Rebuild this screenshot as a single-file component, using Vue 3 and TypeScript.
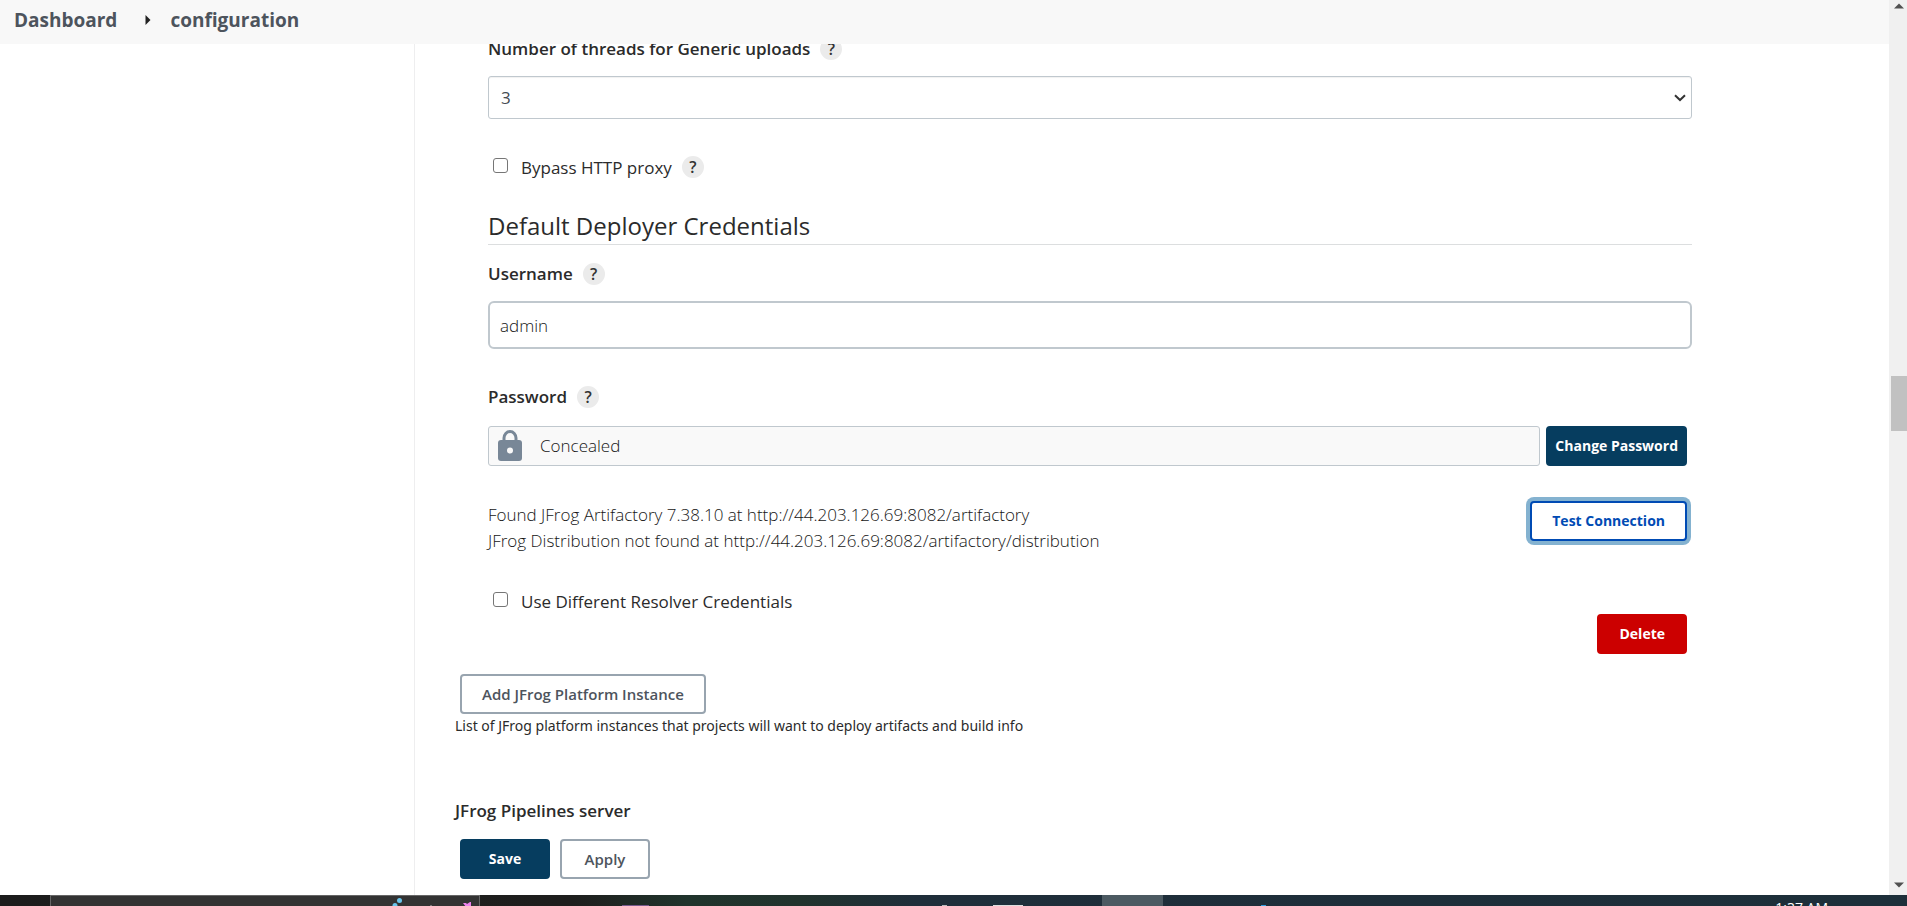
<script setup lang="ts">
import { ref } from 'vue'

const threads = ref('3')
const threadOptions = ['1', '2', '3', '4', '5', '6']
const bypassProxy = ref(false)
const username = ref('admin')
const differentResolver = ref(false)
const statusLines = [
  'Found JFrog Artifactory 7.38.10 at http://44.203.126.69:8082/artifactory',
  'JFrog Distribution not found at http://44.203.126.69:8082/artifactory/distribution',
]
</script>

<template>
  <div class="screen">
    <div class="viewport">
      <div class="page">
        <nav class="breadcrumbs" aria-label="Breadcrumb">
          <a href="#dashboard">Dashboard</a>
          <svg class="crumb-arrow" width="6" height="10" viewBox="0 0 6 10" aria-hidden="true">
            <path d="M0.5 0L5.5 5L0.5 10Z" fill="#222" />
          </svg>
          <a href="#configuration">configuration</a>
        </nav>
        <div class="body">
          <aside class="side"></aside>
          <main class="content">
            <form class="form" @submit.prevent>
              <section class="instance">
                <div class="label-row">
                  <label class="label" for="threads">Number of threads for Generic uploads</label>
                  <button type="button" class="help" aria-label="Help for threads">?</button>
                </div>
                <div class="select-wrap">
                  <select id="threads" v-model="threads">
                    <option v-for="n in threadOptions" :key="n">{{ n }}</option>
                  </select>
                  <svg class="chevron" width="12" height="8" viewBox="0 0 12 8" aria-hidden="true">
                    <path d="M1 1.2L6 6L11 1.2" fill="none" stroke="#333" stroke-width="2" />
                  </svg>
                </div>

                <div class="check-row">
                  <input id="bypass" v-model="bypassProxy" type="checkbox" />
                  <label for="bypass">Bypass HTTP proxy</label>
                  <button type="button" class="help" aria-label="Help for proxy">?</button>
                </div>

                <h2>Default Deployer Credentials</h2>

                <div class="label-row username-row">
                  <label class="label" for="username">Username</label>
                  <button type="button" class="help" aria-label="Help for username">?</button>
                </div>
                <input id="username" v-model="username" class="text-input" type="text" />

                <div class="label-row password-row">
                  <span class="label">Password</span>
                  <button type="button" class="help" aria-label="Help for password">?</button>
                </div>
                <div class="password">
                  <div class="concealed">
                    <svg width="24" height="32" viewBox="0 0 24 32" aria-hidden="true">
                      <path d="M6 12V8a6 6.5 0 0 1 12 0v4" fill="none" stroke="#788797" stroke-width="3" />
                      <rect y="10" width="24" height="21" rx="3" fill="#788797" />
                      <circle cx="12" cy="20.5" r="3" fill="#f9f9f9" />
                    </svg>
                    <span>Concealed</span>
                  </div>
                  <button type="button" class="btn primary tight">Change Password</button>
                </div>

                <div class="test">
                  <div class="status">
                    <div v-for="line in statusLines" :key="line">{{ line }}</div>
                  </div>
                  <button type="button" class="btn outline focused">Test Connection</button>
                </div>

                <div class="check-row">
                  <input id="resolver" v-model="differentResolver" type="checkbox" />
                  <label for="resolver">Use Different Resolver Credentials</label>
                </div>
                <div class="delete-row">
                  <button type="button" class="btn danger">Delete</button>
                </div>
              </section>

              <button type="button" class="btn outline add">Add JFrog Platform Instance</button>
              <p class="hint">List of JFrog platform instances that projects will want to deploy artifacts and build info</p>
              <h3 class="label">JFrog Pipelines server</h3>
              <div class="actions">
                <button type="submit" class="btn primary">Save</button>
                <button type="button" class="btn outline">Apply</button>
              </div>
            </form>
          </main>
        </div>
      </div>
      <div class="scrollbar" aria-hidden="true">
        <svg width="10" height="6" viewBox="0 0 10 6"><path d="M0 5.5L5 0.5L10 5.5Z" fill="#505050" /></svg>
        <div class="thumb"></div>
        <svg width="10" height="6" viewBox="0 0 10 6"><path d="M0 0.5L5 5.5L10 0.5Z" fill="#505050" /></svg>
      </div>
    </div>

    <footer class="taskbar">
      <svg class="tasks" width="1300" height="11" viewBox="0 0 1300 11" aria-hidden="true">
        <rect x="50.5" y="0.5" width="429" height="20" fill="#333" stroke="#666" />
        <circle cx="399.5" cy="5.5" r="2.5" fill="#69c5ec" />
        <circle cx="395" cy="10.5" r="2.5" fill="#69c5ec" />
        <path d="M463 8h3l1 1l3-2h1v5h-5z" fill="#ee82ee" />
        <rect x="430" y="10" width="2" height="1" fill="#777" />
        <rect x="622" y="10" width="27" height="1" fill="#76598a" />
        <rect x="942" y="10" width="5" height="1" fill="#bbb" />
        <rect x="993" y="10" width="30" height="1" fill="#ddd" />
        <rect x="1102" y="0" width="61" height="11" fill="#4c5a62" />
        <rect x="1261" y="10" width="5" height="1" fill="#2f9de0" />
      </svg>
      <time class="clock">1:37 AM</time>
    </footer>
  </div>
</template>

<style>
body {
  margin: 0;
}
</style>

<style scoped>
.screen,
.screen * {
  box-sizing: border-box;
}
.screen {
  display: flex;
  flex-direction: column;
  height: 100vh;
  overflow: hidden;
  background: #fff;
  color: #2b2b2b;
  font: 400 17px/26px "Open Sans", "Noto Sans", sans-serif;
}
.viewport {
  flex: 1;
  display: flex;
  min-height: 0;
}
.page {
  flex: 1;
  display: flex;
  flex-direction: column;
  min-width: 0;
}
.breadcrumbs {
  flex: none;
  display: flex;
  align-items: center;
  height: 44px;
  padding: 0 14px 4px;
  background: #f8f8f8;
}
.breadcrumbs a {
  color: #4d545d;
  font-size: 19px;
  font-weight: 700;
  text-decoration: none;
}
.crumb-arrow {
  margin: 0 19px 0 28px;
}
.body {
  flex: 1;
  display: flex;
  min-height: 0;
  overflow: hidden;
}
.side {
  flex: none;
  width: 415px;
  border-right: 1px solid #eeeeef;
}
.content {
  flex: 1;
  min-width: 0;
  padding: 0 197px 0 40px;
}
.form {
  margin-top: -6px;
}
.instance {
  padding-left: 33px;
}
.label-row,
.check-row {
  display: flex;
  align-items: center;
  height: 22px;
}
.label {
  margin: 0;
  font-size: 17px;
  font-weight: 600;
  line-height: 22px;
}
.help {
  width: 22px;
  height: 22px;
  margin-left: 10px;
  padding: 0;
  border: 0;
  border-radius: 50%;
  background: #ebebeb;
  color: #333;
  font: 600 16px/22px "Open Sans", sans-serif;
  text-align: center;
}
.select-wrap {
  position: relative;
  margin-top: 16px;
}
select {
  display: block;
  width: 100%;
  height: 43px;
  padding: 0 12px;
  border: 1px solid #c0c8ce;
  border-radius: 3px;
  appearance: none;
  background: #fff;
  box-shadow: inset 0 1px 1px #0000000f;
  color: #444b52;
  font: inherit;
}
.chevron {
  position: absolute;
  top: 18px;
  right: 6px;
  pointer-events: none;
}
.check-row {
  align-items: flex-start;
  margin-top: 37px;
  font-weight: 500;
  line-height: 23px;
}
.check-row input {
  width: 15px;
  height: 15px;
  margin: 2px 13px 0 5px;
  border: 1px solid #767676;
  border-radius: 3px;
  appearance: none;
  background: #fff;
}
.check-row input:checked {
  background: #0b6aa2;
}
h2 {
  margin: 32px 0 0;
  padding-bottom: 2px;
  border-bottom: 1px solid #dcdedf;
  font-size: 24px;
  font-weight: 500;
  line-height: 32px;
}
.username-row {
  margin-top: 18px;
}
.text-input {
  display: block;
  width: 100%;
  height: 48px;
  margin-top: 16px;
  padding: 0 10px;
  border: 2px solid #c0c8ce;
  border-radius: 6px;
  background: #fff;
}
.text-input,
.concealed,
.status {
  color: #161616;
  font: 300 17px/26px "Open Sans", "Noto Sans", sans-serif;
}
.password-row {
  margin-top: 37px;
}
.password {
  display: flex;
  gap: 6px;
  margin: 18px 5px 0 0;
}
.concealed {
  flex: 1;
  display: flex;
  align-items: center;
  gap: 18px;
  height: 40px;
  padding: 0 9px;
  border: 1px solid #c0c8ce;
  border-radius: 3px;
  background: #f9f9f9;
}
.btn {
  height: 40px;
  padding: 0 20px;
  border: 2px solid;
  border-radius: 4px;
  font: 600 15px/20px "Open Sans", "Noto Sans", sans-serif;
  white-space: nowrap;
}
.primary {
  border-color: #063d5f;
  background: #063d5f;
  color: #fff;
}
.danger {
  border-color: #c00;
  background: #c00;
  color: #fff;
}
.outline {
  border-color: #98a4af;
  background: #fff;
  color: #4d545d;
}
.primary,
.danger,
.focused {
  font-size: 14px;
  font-weight: 700;
}
.tight {
  padding: 0 7px;
}
.focused {
  border-color: #004bb4;
  box-shadow: 0 0 0 4px #84b2d0;
  color: #004bb4;
}
.test {
  display: flex;
  justify-content: space-between;
  align-items: flex-start;
  margin: 35px 5px 0 0;
}
.status {
  padding-top: 1px;
}
.test + .check-row {
  margin-top: 36px;
}
.delete-row {
  display: flex;
  justify-content: flex-end;
  margin: 2px 5px 0 0;
}
.add {
  display: block;
  margin: 20px 0 0 5px;
}
.hint {
  margin: 2px 0 64px;
  font: 400 14px/20px "Noto Sans", "Open Sans", sans-serif;
}
.actions {
  display: flex;
  gap: 10px;
  margin: 17px 0 0 5px;
}
.actions .btn {
  min-width: 90px;
}
.scrollbar {
  flex: none;
  display: flex;
  flex-direction: column;
  align-items: center;
  justify-content: space-between;
  position: relative;
  width: 18px;
  padding: 3px 0 7px 2px;
  background: #f0f0f0;
}
.thumb {
  position: absolute;
  top: 42%;
  left: 2px;
  right: 0;
  height: 55px;
  background: #c1c1c1;
}
.taskbar {
  flex: none;
  display: flex;
  justify-content: space-between;
  height: 11px;
  padding-right: 79px;
  overflow: hidden;
  background: linear-gradient(90deg, #1c1c1c 0, #1e1e1d 30%, #20342c 36%, #21332d 42%, #1f2e3a 48%, #1d2f3a 100%);
}
.tasks {
  flex: none;
}
.clock {
  padding-top: 3px;
  color: #fff;
  font-size: 14px;
  line-height: 20px;
}
</style>
